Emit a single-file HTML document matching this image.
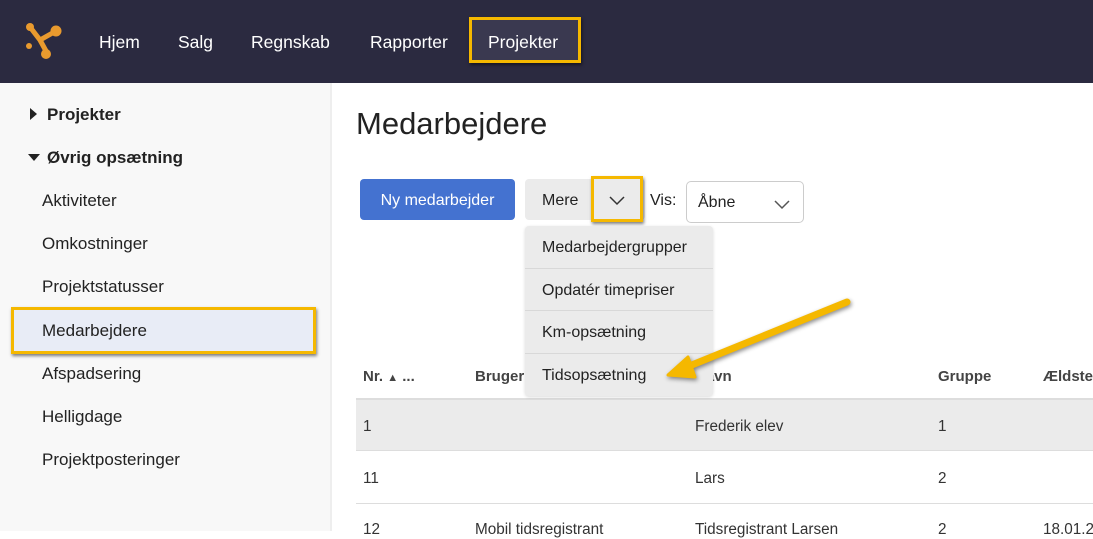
<!DOCTYPE html>
<html><head><meta charset="utf-8"><style>
*{margin:0;padding:0;box-sizing:border-box}
body{width:1093px;height:531px;overflow:hidden;font-family:"Liberation Sans",Arial,sans-serif;background:#fff;position:relative;color:#222}
.hdr{position:absolute;left:0;top:0;width:1093px;height:83px;background:#2b2a40}
.nav{position:absolute;top:32px;color:#fff;font-size:17.5px}
.side{position:absolute;left:0;top:83px;width:332px;height:448px;background:#f8f8f8;border-right:2px solid #eee}
.si{position:absolute;left:42px;font-size:17px;color:#222}
.sb{position:absolute;left:47px;font-size:17px;font-weight:bold;color:#222}
.a{position:absolute}
.dd{position:absolute;left:525px;top:226px;width:188px;height:170px;background:#ebebeb;border-radius:4px;box-shadow:0 1px 3px rgba(0,0,0,.15)}
.dd div{height:42.5px;border-bottom:1px solid #d8d8d8;padding-left:17px;line-height:44px;font-size:16px;color:#222}
.th{position:absolute;top:368px;font-size:15px;font-weight:bold;color:#444}
.td{position:absolute;font-size:15.3px;color:#333}
</style></head><body>
<div class="hdr"></div>
<svg class="a" style="left:24px;top:22px" width="40" height="40" viewBox="0 0 40 40">
<path d="M6 5 L16 18 L32 9 M16 18 L22 29" stroke="#e99a2e" stroke-width="5" fill="none" stroke-linecap="round"/>
<circle cx="6" cy="5" r="4" fill="#e99a2e"/><circle cx="32" cy="9" r="5.5" fill="#e99a2e"/><circle cx="22" cy="32" r="5" fill="#e99a2e"/><circle cx="5" cy="24" r="3" fill="#e99a2e"/>
</svg>
<div class="nav" style="left:99px">Hjem</div>
<div class="nav" style="left:178px">Salg</div>
<div class="nav" style="left:251px">Regnskab</div>
<div class="nav" style="left:370px">Rapporter</div>
<div class="a" style="left:469px;top:17px;width:112px;height:46px;background:#3a3950;border:3px solid #f5b800;box-shadow:1px 2px 3px rgba(0,0,0,.5)"></div>
<div class="nav" style="left:488px">Projekter</div>

<div class="side"></div>
<div class="a" style="left:30px;top:108px;width:0;height:0;border-top:6px solid transparent;border-bottom:6px solid transparent;border-left:7px solid #222"></div>
<div class="sb" style="top:105px">Projekter</div>
<div class="a" style="left:28px;top:154px;width:0;height:0;border-left:6px solid transparent;border-right:6px solid transparent;border-top:7px solid #222"></div>
<div class="sb" style="top:148px">Øvrig opsætning</div>
<div class="si" style="top:191px">Aktiviteter</div>
<div class="si" style="top:234px">Omkostninger</div>
<div class="si" style="top:277px">Projektstatusser</div>
<div class="a" style="left:11px;top:307px;width:305px;height:47px;background:#e8ecf6;border:3px solid #f5b800;box-shadow:1px 2px 3px rgba(0,0,0,.5)"></div>
<div class="si" style="top:321px">Medarbejdere</div>
<div class="si" style="top:364px">Afspadsering</div>
<div class="si" style="top:407px">Helligdage</div>
<div class="si" style="top:450px">Projektposteringer</div>

<div class="a" style="left:356px;top:106px;font-size:31px;color:#222">Medarbejdere</div>
<div class="a" style="left:360px;top:179px;width:155px;height:41px;background:#4472d0;border-radius:4px;color:#fff;font-size:16px;line-height:43px;text-align:center">Ny medarbejder</div>
<div class="a" style="left:525px;top:179px;width:120px;height:41px;background:#ebebeb;border-radius:4px"></div>
<div class="a" style="left:542px;top:192px;font-size:16px">Mere</div>
<div class="a" style="left:591px;top:176px;width:52px;height:46px;border:3px solid #f5b800;box-shadow:1px 2px 3px rgba(0,0,0,.5)"></div>
<svg class="a" style="left:609px;top:196px" width="16" height="10"><path d="M1 1 L8 8 L15 1" stroke="#333" stroke-width="1.5" fill="none"/></svg>
<div class="a" style="left:650px;top:192px;font-size:16px">Vis:</div>
<div class="a" style="left:686px;top:181px;width:118px;height:42px;border:1px solid #ccc;border-radius:5px"></div>
<div class="a" style="left:698px;top:194px;font-size:16px">Åbne</div>
<svg class="a" style="left:774px;top:200px" width="16" height="10"><path d="M1 1 L8 8 L15 1" stroke="#555" stroke-width="1.5" fill="none"/></svg>

<div class="th" style="left:363px">Nr. <span style="font-size:11px">▲</span> ...</div>
<div class="th" style="left:475px">Bruger</div>
<div class="th" style="left:695px">Navn</div>
<div class="th" style="left:938px">Gruppe</div>
<div class="th" style="left:1043px">Ældste</div>
<div class="a" style="left:356px;top:398px;width:737px;height:2px;background:#ddd"></div>
<div class="a" style="left:356px;top:400px;width:737px;height:51px;background:#ebebeb;border-bottom:1px solid #ddd"></div>
<div class="a" style="left:356px;top:503px;width:737px;height:1px;background:#ddd"></div>
<div class="td" style="left:363px;top:418px">1</div><div class="td" style="left:695px;top:418px">Frederik elev</div><div class="td" style="left:938px;top:418px">1</div>
<div class="td" style="left:363px;top:470px">11</div><div class="td" style="left:695px;top:470px">Lars</div><div class="td" style="left:938px;top:470px">2</div>
<div class="td" style="left:363px;top:521px">12</div><div class="td" style="left:475px;top:521px">Mobil tidsregistrant</div><div class="td" style="left:695px;top:521px">Tidsregistrant Larsen</div><div class="td" style="left:938px;top:521px">2</div><div class="td" style="left:1043px;top:521px">18.01.2</div>

<div class="dd"><div>Medarbejdergrupper</div><div>Opdatér timepriser</div><div>Km-opsætning</div><div style="border:none">Tidsopsætning</div></div>

<svg class="a" style="left:650px;top:285px" width="215" height="105">
<g style="filter:drop-shadow(1px 2px 2px rgba(0,0,0,.45))">
<path d="M197 17 L32 84" stroke="#f5b800" stroke-width="7" stroke-linecap="round" fill="none"/>
<path d="M18 90 L38 72 L45 92 Z" fill="#f5b800" stroke="#f5b800" stroke-width="3" stroke-linejoin="round"/>
</g></svg>
</body></html>
